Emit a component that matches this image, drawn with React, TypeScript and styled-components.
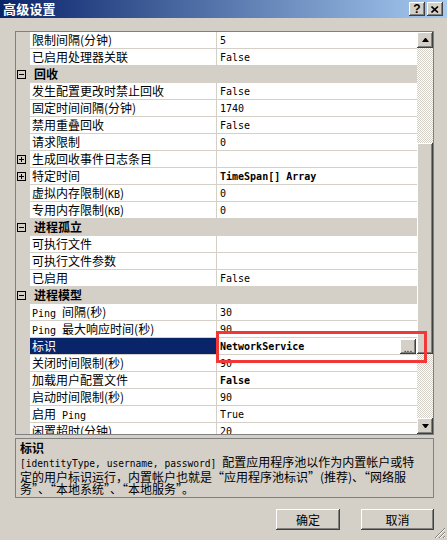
import React from 'react'
import styled, { createGlobalStyle, css } from 'styled-components'

const GlobalStyle = createGlobalStyle`
  html, body {
    margin: 0;
    padding: 0;
    background: #d4d0c8;
  }
  body {
    font-family: "Noto Sans CJK SC", "Liberation Sans", sans-serif;
    font-size: 12px;
    color: #000;
  }
`

const raised = css`
  background: #d4d0c8;
  box-shadow: inset -1px -1px #404040, inset 1px 1px #ffffff, inset -2px -2px #808080, inset 2px 2px #d4d0c8;
`

const Window = styled.div`
  position: relative;
  width: 447px;
  height: 540px;
  background: #d4d0c8;
  overflow: hidden;
`

const TitleBar = styled.div`
  height: 18px;
  display: flex;
  align-items: center;
  justify-content: space-between;
  padding: 0 4px 0 3px;
  background: linear-gradient(to right, #0a246a, #a6caf0);
`

const TitleText = styled.div`
  color: #fff;
  font-weight: bold;
  font-size: 13px;
  line-height: 18px;
  letter-spacing: 0.2px;
`

const TitleButtons = styled.div`
  display: flex;
  gap: 2px;
`

const TitleButton = styled.div`
  ${raised}
  width: 16px;
  height: 14px;
  display: flex;
  align-items: center;
  justify-content: center;
  font-family: "Liberation Sans", sans-serif;
  font-weight: bold;
  font-size: 12px;
  line-height: 14px;
`

const Body = styled.div`
  padding: 13px 13px 0 15px;
`

const Grid = styled.div`
  display: flex;
  height: 404px;
  box-sizing: border-box;
  border: 1px solid #808080;
  background: #fff;
`

const Rows = styled.div`
  flex: 1;
  overflow: hidden;
`

const Row = styled.div<{ $category?: boolean }>`
  display: flex;
  height: 17px;
  background: ${({ $category }) => ($category ? '#d4d0c8' : '#fff')};
`

const Margin = styled.div`
  width: 14px;
  flex: none;
  height: 17px;
  background: #d4d0c8;
  display: flex;
  align-items: center;
  padding-left: 1px;
  box-sizing: border-box;
  padding-bottom: 1px;
`

const ToggleBox = styled.div<{ $plus?: boolean }>`
  position: relative;
  width: 9px;
  height: 9px;
  box-sizing: border-box;
  border: 1px solid #000;
  &::before {
    content: '';
    position: absolute;
    left: 1px;
    top: 3px;
    width: 5px;
    height: 1px;
    background: #000;
  }
  &::after {
    content: '';
    display: ${({ $plus }) => ($plus ? 'block' : 'none')};
    position: absolute;
    left: 3px;
    top: 1px;
    width: 1px;
    height: 5px;
    background: #000;
  }
`

const CategoryTitle = styled.div`
  flex: 1;
  padding-left: 4px;
  font-weight: bold;
  line-height: 16px;
`

const NameCell = styled.div<{ $selected?: boolean }>`
  width: 187px;
  flex: none;
  box-sizing: border-box;
  border-right: 1px solid #d4d0c8;
  border-bottom: 1px solid #d4d0c8;
  padding-left: 2px;
  line-height: 16px;
  white-space: pre;
  overflow: hidden;
  background: ${({ $selected }) => ($selected ? '#0a246a' : '#fff')};
  color: ${({ $selected }) => ($selected ? '#fff' : '#000')};
`

const ValueCell = styled.div<{ $bold?: boolean }>`
  flex: 1;
  display: flex;
  align-items: center;
  justify-content: space-between;
  box-sizing: border-box;
  border-bottom: 1px solid #d4d0c8;
  padding-left: 3px;
  padding-right: 1px;
  font-family: "DejaVu Sans Mono", "Liberation Mono", monospace;
  font-size: 10px;
  font-weight: ${({ $bold }) => ($bold ? 'bold' : 'normal')};
  white-space: nowrap;
`

const Latin = styled.span`
  font-family: "DejaVu Sans Mono", "Liberation Mono", monospace;
  font-size: 10px;
`

const EllipsisButton = styled.div`
  ${raised}
  width: 16px;
  height: 15px;
  display: flex;
  align-items: flex-end;
  justify-content: center;
  font-family: "Liberation Sans", sans-serif;
  font-weight: normal;
  font-size: 10px;
  line-height: 11px;
`

const ScrollBar = styled.div`
  width: 16px;
  flex: none;
  display: flex;
  flex-direction: column;
`

const ScrollButton = styled.div`
  ${raised}
  width: 16px;
  height: 16px;
  flex: none;
  display: flex;
  align-items: center;
  justify-content: center;
`

const Arrow = styled.div<{ $down?: boolean }>`
  width: 1px;
  height: 0;
  border-left: 3px solid transparent;
  border-right: 3px solid transparent;
  ${({ $down }) => ($down ? 'border-top: 4px solid #000;' : 'border-bottom: 4px solid #000;')}
`

const Track = styled.div`
  flex: 1;
  background-color: #fff;
  background-image: repeating-conic-gradient(#d4d0c8 0 25%, #ffffff 0 50%);
  background-size: 2px 2px;
`

const Thumb = styled.div`
  ${raised}
  margin-top: 95px;
  height: 211px;
`

const Description = styled.div`
  margin-top: 3px;
  height: 60px;
  box-sizing: border-box;
  border: 1px solid #808080;
  padding: 1px 4px 0 4px;
`

const DescTitle = styled.div`
  font-weight: bold;
  line-height: 16px;
`

const DescLine = styled.div`
  line-height: 12.5px;
  white-space: nowrap;
`

const DescLatin = styled.span`
  font-family: "DejaVu Sans Mono", "Liberation Mono", monospace;
  font-size: 9.6px;
`

const Footer = styled.div`
  display: flex;
  justify-content: flex-end;
  gap: 21px;
  margin-top: 11px;
`

const DialogButton = styled.button<{ $width: number }>`
  ${raised}
  width: ${({ $width }) => $width}px;
  height: 21px;
  border: none;
  padding: 0;
  font-family: "Noto Sans CJK SC", sans-serif;
  font-size: 12px;
  color: #000;
`

const Highlight = styled.div`
  position: absolute;
  left: 216px;
  top: 331px;
  width: 211px;
  height: 32px;
  box-sizing: border-box;
  border: 3px solid #f03838;
  pointer-events: none;
`

const Grip = styled.svg`
  position: absolute;
  right: 1px;
  bottom: 1px;
`

type Item =
  | { kind: 'category'; name: string }
  | { kind: 'prop'; name: string; value: string; bold?: boolean; expandable?: boolean; selected?: boolean }

const items: Item[] = [
  { kind: 'prop', name: '限制间隔(分钟)', value: '5' },
  { kind: 'prop', name: '已启用处理器关联', value: 'False' },
  { kind: 'category', name: '回收' },
  { kind: 'prop', name: '发生配置更改时禁止回收', value: 'False' },
  { kind: 'prop', name: '固定时间间隔(分钟)', value: '1740' },
  { kind: 'prop', name: '禁用重叠回收', value: 'False' },
  { kind: 'prop', name: '请求限制', value: '0' },
  { kind: 'prop', name: '生成回收事件日志条目', value: '', expandable: true },
  { kind: 'prop', name: '特定时间', value: 'TimeSpan[] Array', bold: true, expandable: true },
  { kind: 'prop', name: '虚拟内存限制(KB)', value: '0' },
  { kind: 'prop', name: '专用内存限制(KB)', value: '0' },
  { kind: 'category', name: '进程孤立' },
  { kind: 'prop', name: '可执行文件', value: '' },
  { kind: 'prop', name: '可执行文件参数', value: '' },
  { kind: 'prop', name: '已启用', value: 'False' },
  { kind: 'category', name: '进程模型' },
  { kind: 'prop', name: 'Ping 间隔(秒)', value: '30' },
  { kind: 'prop', name: 'Ping 最大响应时间(秒)', value: '90' },
  { kind: 'prop', name: '标识', value: 'NetworkService', bold: true, selected: true },
  { kind: 'prop', name: '关闭时间限制(秒)', value: '90' },
  { kind: 'prop', name: '加载用户配置文件', value: 'False', bold: true },
  { kind: 'prop', name: '启动时间限制(秒)', value: '90' },
  { kind: 'prop', name: '启用 Ping', value: 'True' },
  { kind: 'prop', name: '闲置超时(分钟)', value: '20' },
]

// latin words (with their spaces) in the names use the narrow mono face, like the original
function MixedText({ text }: { text: string }) {
  const parts = text.split(/( ?[A-Za-z]+ ?)/)
  return (
    <>
      {parts.map((p, i) => (/[A-Za-z]/.test(p) ? <Latin key={i}>{p}</Latin> : p))}
    </>
  )
}

function PropertyRow({ item }: { item: Item }) {
  if (item.kind === 'category') {
    return (
      <Row $category>
        <Margin>
          <ToggleBox />
        </Margin>
        <CategoryTitle>{item.name}</CategoryTitle>
      </Row>
    )
  }
  return (
    <Row>
      <Margin>{item.expandable && <ToggleBox $plus />}</Margin>
      <NameCell $selected={item.selected}>
        <MixedText text={item.name} />
      </NameCell>
      <ValueCell $bold={item.bold}>
        <span>{item.value}</span>
        {item.selected && <EllipsisButton>...</EllipsisButton>}
      </ValueCell>
    </Row>
  )
}

export default function App() {
  return (
    <Window>
      <GlobalStyle />
      <TitleBar>
        <TitleText>高级设置</TitleText>
        <TitleButtons>
          <TitleButton>?</TitleButton>
          <TitleButton>
            <svg width="8" height="7" viewBox="0 0 8 7">
              <path d="M0.5 0.5 L7 6.5 M7 0.5 L0.5 6.5" stroke="#000" strokeWidth="1.6" />
            </svg>
          </TitleButton>
        </TitleButtons>
      </TitleBar>
      <Body>
        <Grid>
          <Rows>
            {items.map((item, i) => (
              <PropertyRow key={i} item={item} />
            ))}
          </Rows>
          <ScrollBar>
            <ScrollButton>
              <Arrow />
            </ScrollButton>
            <Track>
              <Thumb />
            </Track>
            <ScrollButton>
              <Arrow $down />
            </ScrollButton>
          </ScrollBar>
        </Grid>
        <Description>
          <DescTitle>标识</DescTitle>
          <DescLine>
            <DescLatin>[identityType, username, password] </DescLatin>配置应用程序池以作为内置帐户或特
          </DescLine>
          <DescLine>定的用户标识运行，内置帐户也就是“应用程序池标识”(推荐)、“网络服</DescLine>
          <DescLine>务”、“本地系统”、“本地服务”。</DescLine>
        </Description>
        <Footer>
          <DialogButton $width={64}>确定</DialogButton>
          <DialogButton $width={73}>取消</DialogButton>
        </Footer>
      </Body>
      <Highlight />
      <Grip width="12" height="12" viewBox="0 0 12 12">
        <path d="M11 1 L1 11 M11 5 L5 11 M11 9 L9 11" stroke="#808080" strokeWidth="1" />
        <path d="M11 2 L2 11 M11 6 L6 11 M11 10 L10 11" stroke="#fff" strokeWidth="1" />
      </Grip>
    </Window>
  )
}
